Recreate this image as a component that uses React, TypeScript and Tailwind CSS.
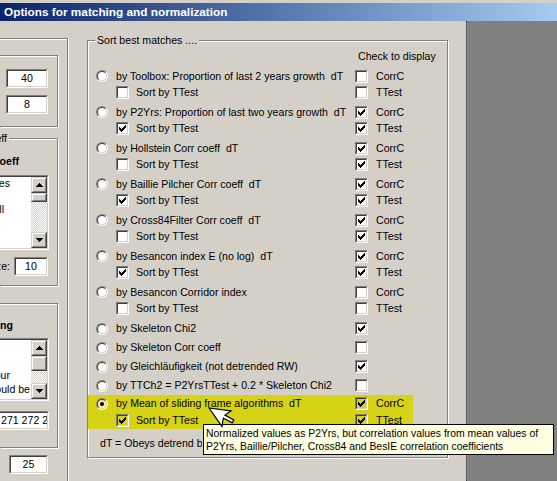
import React from "react";

const pairs = [
  { label: "by Toolbox: Proportion of last 2 years growth  dT", sort: false, corr: false, tt: false },
  { label: "by P2Yrs: Proportion of last two years growth  dT", sort: true, corr: true, tt: true },
  { label: "by Hollstein Corr coeff  dT", sort: false, corr: true, tt: true },
  { label: "by Baillie Pilcher Corr coeff  dT", sort: true, corr: true, tt: true },
  { label: "by Cross84Filter Corr coeff  dT", sort: false, corr: true, tt: true },
  { label: "by Besancon index E (no log)  dT", sort: true, corr: true, tt: true },
  { label: "by Besancon Corridor index", sort: false, corr: false, tt: false },
];

const singles = [
  { label: "by Skeleton Chi2", on: true },
  { label: "by Skeleton Corr coeff", on: false },
  { label: "by Gleichläufigkeit (not detrended RW)", on: true },
  { label: "by TTCh2 = P2YrsTTest + 0.2 * Skeleton Chi2", on: false },
];

const sunkenOuter = "border border-t-[#808080] border-l-[#808080] border-r-white border-b-white";
const sunkenInner = "border border-t-[#404040] border-l-[#404040] border-r-[#d4d0c8] border-b-[#d4d0c8]";
const etched = "border border-[#808080] shadow-[inset_1px_1px_0_#fff,1px_1px_0_#fff]";

function Tick() {
  return (
    <svg width="7" height="7" viewBox="0 0 7 7" shapeRendering="crispEdges" className="block m-[1px]">
      <path
        d="M6 0h1v1h-1z M5 1h2v1h-2z M0 2h1v1h-1z M4 2h3v1h-3z M0 3h2v1h-2z M3 3h3v1h-3z M0 4h5v1h-5z M1 5h3v1h-3z M2 6h1v1h-1z"
        fill="#000"
      />
    </svg>
  );
}

function Check({ checked, yellow }: { checked?: boolean; yellow?: boolean }) {
  return (
    <span className={`inline-block w-[13px] h-[13px] shrink-0 ${sunkenOuter}`}>
      <span className={`block w-full h-full ${sunkenInner} ${yellow ? "bg-[#d6d316]" : "bg-white"}`}>
        {checked && <Tick />}
      </span>
    </span>
  );
}

function Radio({ on, yellow }: { on?: boolean; yellow?: boolean }) {
  return (
    <span className={`relative inline-block w-[12px] h-[12px] shrink-0 rounded-full ${sunkenOuter}`}>
      <span className={`block w-full h-full rounded-full ${sunkenInner} ${yellow ? "bg-[#f4f0a0]" : "bg-white"}`} />
      {on && <span className="absolute left-[3px] top-[3px] w-[4px] h-[4px] rounded-full bg-black" />}
    </span>
  );
}

function Edit({ children, className = "", left }: { children: React.ReactNode; className?: string; left?: boolean }) {
  return (
    <div className={`h-[19px] ${sunkenOuter} ${className}`}>
      <div
        className={`h-full ${sunkenInner} bg-white flex items-center overflow-hidden whitespace-nowrap ${
          left ? "justify-start pl-[3px]" : "justify-center"
        }`}
      >
        {children}
      </div>
    </div>
  );
}

function Arrow({ up }: { up?: boolean }) {
  return (
    <svg width="7" height="4" viewBox="0 0 7 4" shapeRendering="crispEdges">
      <path
        d={up ? "M3 0h1v1h-1z M2 1h3v1h-3z M1 2h5v1h-5z M0 3h7v1h-7z" : "M0 0h7v1h-7z M1 1h5v1h-5z M2 2h3v1h-3z M3 3h1v1h-1z"}
        fill="#000"
      />
    </svg>
  );
}

function Raised({ h, children }: { h: string; children?: React.ReactNode }) {
  return (
    <div className={`w-[16px] ${h} shrink-0 border border-t-[#d4d0c8] border-l-[#d4d0c8] border-r-[#404040] border-b-[#404040]`}>
      <div className="w-full h-full border border-t-white border-l-white border-r-[#808080] border-b-[#808080] bg-[#d4d0c8] flex items-center justify-center">
        {children}
      </div>
    </div>
  );
}

function ListBox({
  h,
  lines,
  thumb,
  lead,
}: {
  h: string;
  lines: { t: string; pr: string }[];
  thumb: string;
  lead: string;
}) {
  return (
    <div className={`-ml-[10px] w-[59px] ${h} ${sunkenOuter}`}>
      <div className={`h-full flex ${sunkenInner} bg-white`}>
        <div className="flex-1 min-w-0 overflow-hidden">
          {lines.map((l, i) => (
            <div key={i} className={`flex justify-end whitespace-nowrap ${lead} ${l.pr}`}>
              {l.t}
            </div>
          ))}
        </div>
        <div className="w-[16px] flex flex-col">
          <Raised h="h-[16px]">
            <Arrow up />
          </Raised>
          <Raised h={thumb} />
          <div className="flex-1 bg-[repeating-conic-gradient(#ffffff_0%_25%,#d4d0c8_0%_50%)] [background-size:2px_2px]" />
          <Raised h="h-[16px]">
            <Arrow />
          </Raised>
        </div>
      </div>
    </div>
  );
}

function Row({ h, left, right }: { h: string; left: React.ReactNode; right?: React.ReactNode }) {
  return (
    <div className={`flex items-center pl-[8px] ${h}`}>
      <div className="w-[259px] flex items-center">{left}</div>
      {right}
    </div>
  );
}

function RadioLabel({ text, on, yellow }: { text: string; on?: boolean; yellow?: boolean }) {
  return (
    <>
      <Radio on={on} yellow={yellow} />
      <span className="ml-[8px] whitespace-pre">{text}</span>
    </>
  );
}

function SortLabel({ on, yellow }: { on?: boolean; yellow?: boolean }) {
  return (
    <>
      <span className="ml-[20px] flex">
        <Check checked={on} yellow={yellow} />
      </span>
      <span className="ml-[7px]">Sort by TTest</span>
    </>
  );
}

function Side({ on, text, yellow }: { on?: boolean; text?: string; yellow?: boolean }) {
  return (
    <div className="flex items-center">
      <Check checked={on} yellow={yellow} />
      {text && <span className="ml-[8px]">{text}</span>}
    </div>
  );
}

export default function App() {
  return (
    <div className="relative w-[557px] h-[481px] overflow-hidden bg-[#d4d0c8] text-black text-[10.6px] leading-[13px] font-['Liberation_Sans',Arial,sans-serif]">
      {/* caption */}
      <div className="pt-[3px]">
        <div className="h-[18px] flex items-center pl-[4px] bg-[linear-gradient(to_right,#0a246a,#a6caf0)] text-white font-bold text-[11.8px]">
          Options for matching and normalization
        </div>
      </div>

      <div className="flex h-[460px]">
        {/* left, cut-off panel */}
        <div className="w-[69px] shrink-0 pt-[17px]">
          <div className="h-[443px] w-[68px] border-t border-r border-[#808080] shadow-[inset_0_1px_0_#fff,1px_0_0_#fff]">
            <div className="mt-[16px] h-[72px] w-[58px] border-t border-r border-b border-[#808080] shadow-[inset_0_1px_0_#fff,1px_1px_0_#fff] pt-[13px]">
              <Edit className="ml-[6px] w-[42px]">40</Edit>
              <Edit className="ml-[6px] w-[42px] mt-[7px]">8</Edit>
            </div>

            <div className="relative mt-[11px] h-[148px] w-[58px] border-t border-r border-b border-[#808080] shadow-[inset_0_1px_0_#fff,1px_1px_0_#fff]">
              <div className="absolute left-0 -top-[7px] w-[9px] flex justify-end whitespace-nowrap">
                <span className="bg-[#d4d0c8] pr-[2px]">Correlation coeff</span>
              </div>
              <div className="mt-[16px] w-[19px] flex justify-end whitespace-nowrap font-bold">Correlation coeff</div>
              <div className="mt-[7px]">
                <ListBox
                  h="h-[75px]"
                  thumb="h-[9px]"
                  lead="leading-[13px]"
                  lines={[
                    { t: "All series", pr: "pr-[21px]" },
                    { t: "Mean", pr: "pr-[60px]" },
                    { t: "Only master skill", pr: "pr-[27px]" },
                  ]}
                />
              </div>
              <div className="mt-[7px] flex items-center">
                <div className="w-[10px] flex justify-end whitespace-nowrap">Overlap size:</div>
                <Edit className="ml-[4px] w-[34px]">10</Edit>
              </div>
            </div>

            <div className="mt-[17px] h-[145px] w-[58px] border-t border-r border-b border-[#808080] shadow-[inset_0_1px_0_#fff,1px_1px_0_#fff]">
              <div className="mt-[15px] w-[13px] flex justify-end whitespace-nowrap font-bold">Normalizing</div>
              <div className="mt-[6px]">
                <ListBox
                  h="h-[63px]"
                  thumb="h-[15px]"
                  lead="leading-[14px]"
                  lines={[
                    { t: "Enter the years", pr: "pr-[60px]" },
                    { t: "to be excluded", pr: "pr-[60px]" },
                    { t: "from your", pr: "pr-[21px]" },
                    { t: "curve should be", pr: "pr-[1px]" },
                  ]}
                />
              </div>
              <Edit left className="mt-[10px] -ml-[4px] w-[53px]">
                271 272 273 274
              </Edit>
            </div>

            <Edit className="mt-[7px] ml-[9px] w-[39px]">25</Edit>
          </div>
        </div>

        {/* main group */}
        <div className={`relative ml-[18px] mt-[19px] w-[361px] h-[418px] shrink-0 ${etched}`}>
          <span className="absolute left-[7px] -top-[7px] px-[2px] bg-[#d4d0c8] whitespace-nowrap">Sort best matches ....</span>
          <div className="pt-[8px]">
            <div className="h-[14px] pl-[270px] flex items-center whitespace-nowrap">Check to display</div>
            <div className="mt-[5px]">
              {pairs.map((p, i) => (
                <div key={i} className={i === pairs.length - 1 ? "mb-[3px]" : "mb-[4px]"}>
                  <Row h="h-[16px]" left={<RadioLabel text={p.label} />} right={<Side on={p.corr} text="CorrC" />} />
                  <Row h="h-[16px]" left={<SortLabel on={p.sort} />} right={<Side on={p.tt} text="TTest" />} />
                </div>
              ))}
              {singles.map((s, i) => (
                <Row key={i} h="h-[19px]" left={<RadioLabel text={s.label} />} right={<Side on={s.on} />} />
              ))}
              <div className="w-[325px] bg-[#d6d316]">
                <Row
                  h="h-[17px]"
                  left={<RadioLabel text="by Mean of sliding frame algorithms  dT" on yellow />}
                  right={<Side on text="CorrC" yellow />}
                />
                <Row h="h-[17px]" left={<SortLabel on yellow />} right={<Side on text="TTest" yellow />} />
              </div>
              <div className="mt-[7px] h-[14px] ml-[12px] w-[102px] flex items-center whitespace-nowrap overflow-hidden">
                dT = Obeys detrend before matching
              </div>
            </div>
          </div>
        </div>

        {/* desktop behind */}
        <div className="ml-auto w-[91px] shrink-0 bg-[#808080] border-l border-dotted border-[#404040]" />
      </div>

      {/* tooltip */}
      <div className="absolute left-[203px] top-[424px] w-[351px] h-[31px] border border-black bg-[#ffffe1] pl-[2px] pt-[2px] whitespace-nowrap text-[10.4px]">
        <div>Normalized values as P2Yrs, but correlation values from mean values of</div>
        <div>P2Yrs, Baillie/Pilcher, Cross84 and BesIE correlation coefficients</div>
      </div>

      {/* mouse pointer */}
      <svg className="absolute left-[209px] top-[408px] overflow-visible" width="32" height="20">
        <g transform="rotate(-35) scale(1.5)">
          <path d="M0 0 L0 15 L4 11 L7 17 L9 16 L6 10 L11 10 Z" fill="#fff" stroke="#000" strokeWidth="0.8" strokeLinejoin="miter" />
        </g>
      </svg>
    </div>
  );
}
